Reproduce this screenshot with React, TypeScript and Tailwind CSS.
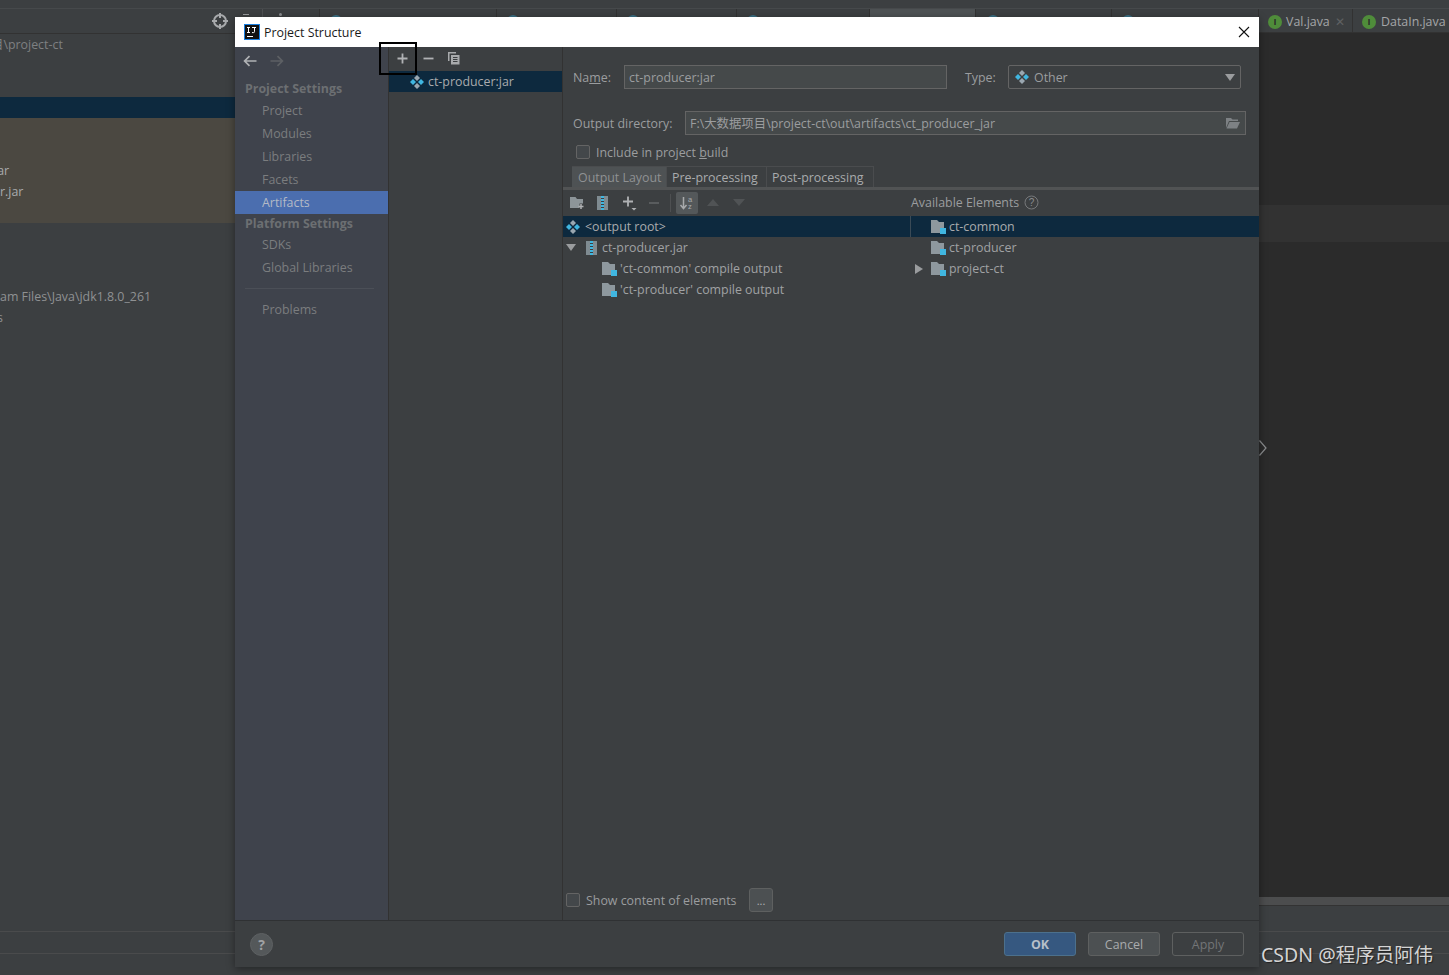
import React from "react";

const Artifact = ({ s = 14 }: { s?: number }) => (
  <svg width={s} height={s} viewBox="0 0 14 14" className="shrink-0">
    <path d="M7 0 10 3 7 6 4 3Z" fill="#9aa7b0" />
    <path d="M7 8 10 11 7 14 4 11Z" fill="#9aa7b0" />
    <path d="M3 4 6 7 3 10 0 7Z" fill="#40b6e0" />
    <path d="M11 4 14 7 11 10 8 7Z" fill="#40b6e0" />
  </svg>
);

const Module = () => (
  <svg width="15" height="14" viewBox="0 0 15 14" className="shrink-0">
    <path d="M0 0H6L8 2H13V8H9V13H0Z" fill="#8e989e" />
    <rect x="9" y="8" width="6" height="6" fill="#40b6e0" />
  </svg>
);

const Jar = () => (
  <svg width="11" height="14" viewBox="0 0 11 14" className="shrink-0">
    <rect x="0" y="0" width="4" height="14" fill="#7f8b91" />
    <rect x="7" y="0" width="4" height="14" fill="#7f8b91" />
    <path d="M4 0h3v2H4zM4 3h3v2H4zM4 6h3v2H4zM4 9h3v2H4zM4 12h3v2H4z" fill="#40b6e0" />
  </svg>
);

const Down = ({ c = "#9a9c9e" }: { c?: string }) => (
  <svg width="10" height="7" viewBox="0 0 10 7" className="shrink-0"><path d="M0 0H10L5 7Z" fill={c} /></svg>
);

const Arrow = ({ dir, c }: { dir: "l" | "r"; c: string }) => (
  <svg width="14" height="12" viewBox="0 0 14 12" className="shrink-0">
    {dir === "l" ? (
      <path d="M13.5 6H2M6.5 1.2 1.6 6l4.9 4.8" fill="none" stroke={c} strokeWidth="1.7" />
    ) : (
      <path d="M.5 6H12M7.5 1.2 12.4 6l-4.9 4.8" fill="none" stroke={c} strokeWidth="1.7" />
    )}
  </svg>
);

const SideItem = ({ t, on }: { t: string; on?: boolean }) => (
  <div className={`h-[23px] pl-[27px] flex items-center ${on ? "bg-[#4b6eaf] text-[#b4bac6]" : "text-[#7b7d7f]"}`}>{t}</div>
);

const SideHead = ({ t, h }: { t: string; h: string }) => (
  <div className={`${h} pl-[10px] flex items-center font-bold text-[#6c6f72]`}>{t}</div>
);

const Btn = ({ t, cls }: { t: string; cls: string }) => (
  <div className={`w-[72px] h-[24px] rounded-[3px] border flex items-center justify-center ${cls}`}>{t}</div>
);

const Tab = ({ t, cls }: { t: string; cls: string }) => (
  <div className={`h-[21px] flex items-center border-t border-r border-[#4a4c4e] ${cls}`}>{t}</div>
);

const HiddenTab = ({ w, tip }: { w: string; tip: string }) => (
  <div className={`${w} h-full shrink-0 border-r border-[#323232] ${tip}`}>
    <div className="w-[12px] h-[12px] rounded-full bg-[#3a7186] mt-[6px]" />
  </div>
);

const ClassIcon = () => (
  <span className="w-[14px] h-[14px] rounded-full bg-[#4f8c3a] text-[#2b2b2b] text-[9px] font-bold flex items-center justify-center shrink-0">I</span>
);

export default function App() {
  return (
    <div className="relative w-[1449px] h-[975px] overflow-hidden bg-[#3c3f41] text-[12.4px] leading-[15px] text-[#9b9d9f] font-['Open_Sans','Noto_Sans_CJK_SC',sans-serif]">
      {/* IDE behind the dialog */}
      <div className="h-[9px] bg-[#3c3f41] border-b border-[#46494b]" />
      <div className="flex h-[966px]">
        <div className="w-[320px] shrink-0 flex flex-col bg-[#3c3f41]">
          <div className="h-[25px] border-b border-r border-[#323232] flex items-center pl-[212px]">
            <svg width="16" height="16" viewBox="0 0 16 16" className="shrink-0">
              <circle cx="8" cy="8" r="6" fill="none" stroke="#a8aaac" strokeWidth="2" />
              <path d="M8 0v5M8 11v5M0 8h5M11 8h5" stroke="#a8aaac" strokeWidth="2" />
            </svg>
            <div className="w-[6px] h-px bg-[#9a9c9e] ml-[15px] self-start mt-[5px]" />
            <div className="w-px h-full bg-[#4e5052] ml-[13px]" />
            <div className="w-[3px] h-[3px] rounded-full bg-[#8a8c8e] ml-[16px] self-start mt-[4px]" />
          </div>
          <div className="h-[21px] flex items-center text-[#7e8082] whitespace-nowrap -ml-[9px]">目\project-ct</div>
          <div className="h-[42px]" />
          <div className="h-[21px] bg-[#0d293e]" />
          <div className="h-[105px] bg-[#4b4841] flex flex-col justify-end pb-[21px] text-[#a9abad] overflow-hidden">
            <div className="h-[21px] flex items-center -ml-[6px]">jar</div>
            <div className="h-[21px] flex items-center">r.jar</div>
          </div>
          <div className="h-[63px]" />
          <div className="h-[21px] flex items-center whitespace-nowrap text-[#8f9193]">am Files\Java\jdk1.8.0_261</div>
          <div className="h-[21px] flex items-center text-[#8f9193] -ml-[3px]">s</div>
          <div className="flex-1" />
          <div className="h-[22px] border-t border-[#4a4b4c]" />
          <div className="h-[22px] border-t border-[#4a4b4c]" />
        </div>
        <div className="flex-1 flex flex-col">
          <div className="h-[24px] shrink-0 border-b border-[#323232] flex items-stretch text-[#a4a6a8]">
            <HiddenTab w="w-[177px]" tip="pl-[10px]" />
            <HiddenTab w="w-[120px]" tip="pl-[10px]" />
            <HiddenTab w="w-[120px]" tip="pl-[10px]" />
            <HiddenTab w="w-[133px]" tip="pl-[10px]" />
            <div className="w-[106px] shrink-0 bg-[#4e5254] border-r border-[#323232]" />
            <HiddenTab w="w-[136px]" tip="pl-[11px]" />
            <HiddenTab w="w-[147px]" tip="pl-[10px]" />
            <div className="w-[94px] shrink-0 flex items-center gap-[4px] pl-[9px] border-r border-[#323232] pt-[2px] whitespace-nowrap">
              <ClassIcon />
              <span>Val.java</span>
              <span className="text-[#5f6163] text-[12px] ml-[1px]">✕</span>
            </div>
            <div className="flex-1 flex items-center gap-[5px] pl-[9px] whitespace-nowrap pt-[2px]">
              <ClassIcon />
              <span>DataIn.java</span>
            </div>
          </div>
          <div className="flex-1 bg-[#2b2b2b] flex flex-col">
            <div className="h-[172px]" />
            <div className="h-[37px] bg-[#323232]" />
            <div className="flex-1" />
          </div>
          <div className="h-[9px] bg-[#4c4d4e] border-b border-[#333]" />
          <div className="h-[25px]" />
          <div className="h-[22px] border-t border-[#4a4b4c]" />
          <div className="h-[22px] border-t border-[#4a4b4c]" />
        </div>
      </div>
      <svg width="8" height="16" viewBox="0 0 8 16" className="absolute left-[1259px] top-[440px]">
        <path d="M.5.5 7 8 .5 15.5" fill="none" stroke="#8a8c8e" strokeWidth="1.2" />
      </svg>

      {/* Dialog */}
      <div className="absolute left-[235px] top-[17px] w-[1024px] h-[950px] bg-[#3c3f41] flex flex-col shadow-[0_2px_8px_rgba(0,0,0,0.4)]">
        <div className="h-[30px] shrink-0 bg-white text-[#1a1a1a] flex items-center pl-[9px] pr-[9px]">
          <svg width="16" height="16" viewBox="0 0 16 16" className="shrink-0">
            <rect width="16" height="16" fill="#1a7fe0" />
            <rect x="1" y="1" width="14" height="14" fill="#111" />
            <rect x="3" y="12" width="6" height="1" fill="#fff" />
            <path d="M3 3.5h3M4.5 3.5v5M3 8.5h3M8 3.5h4M10.5 3.5v4.2q0 .9-1 .9H8" fill="none" stroke="#fff" strokeWidth="1" />
          </svg>
          <span className="ml-[4px]">Project Structure</span>
          <svg width="12" height="12" viewBox="0 0 12 12" className="ml-auto mr-[0px]">
            <path d="M1 1 11 11M11 1 1 11" stroke="#111" strokeWidth="1.1" />
          </svg>
        </div>

        <div className="flex-1 flex min-h-0 border-b border-[#2f3133]">
          {/* Sidebar */}
          <div className="w-[154px] shrink-0 bg-[#3f434c] border-r border-[#323232] flex flex-col">
            <div className="h-[31px] flex items-center pl-[8px] gap-[13px] pb-[3px]">
              <Arrow dir="l" c="#b0b2b4" />
              <Arrow dir="r" c="#5d6064" />
            </div>
            <SideHead t="Project Settings" h="h-[21px]" />
            <SideItem t="Project" />
            <SideItem t="Modules" />
            <SideItem t="Libraries" />
            <SideItem t="Facets" />
            <SideItem t="Artifacts" on />
            <SideHead t="Platform Settings" h="h-[19px]" />
            <SideItem t="SDKs" />
            <SideItem t="Global Libraries" />
            <div className="h-[19px] flex items-center pl-[10px] pr-[14px]"><div className="h-px w-full bg-[#4b4f57]" /></div>
            <SideItem t="Problems" />
          </div>

          {/* Artifact list */}
          <div className="w-[174px] shrink-0 border-r border-[#323232] flex flex-col">
            <div className="h-[24px] flex items-center pl-[7px] gap-[13px] pb-[2px]">
              <svg width="13" height="13" viewBox="0 0 13 13"><path d="M6.5 1.5v10M1.5 6.5h10" stroke="#b0b2b4" strokeWidth="1.8" /></svg>
              <svg width="13" height="13" viewBox="0 0 13 13"><path d="M1.5 6.5h10" stroke="#b0b2b4" strokeWidth="1.8" /></svg>
              <svg width="13" height="14" viewBox="0 0 13 14" className="-ml-[1px]">
                <path d="M1 1v9h1.5V2.5H9V1Z" fill="#a8aaac" />
                <path d="M4 4h8.5v9.5H4Z" fill="#a8aaac" />
                <path d="M6 6.5h4.5M6 8.5h4.5M6 10.5h4.5" stroke="#3c3f41" strokeWidth="1" />
              </svg>
            </div>
            <div className="h-[21px] bg-[#0d293e] flex items-center pl-[21px] gap-[4px] text-[#a9abad]">
              <Artifact />
              <span>ct-producer:jar</span>
            </div>
          </div>

          {/* Settings */}
          <div className="flex-1 min-w-0 flex flex-col">
            <div className="h-[18px] shrink-0" />
            <div className="h-[24px] shrink-0 flex items-center pl-[10px]">
              <span className="w-[51px]">Na<span className="underline">m</span>e:</span>
              <div className="w-[323px] h-full bg-[#45494a] border border-[#646464] flex items-center pl-[4px]">ct-producer:jar</div>
              <span className="ml-[18px] w-[43px]">Type:</span>
              <div className="w-[233px] h-full bg-[#3c3f41] border border-[#646464] rounded-[2px] flex items-center pl-[6px] pr-[5px] gap-[5px]">
                <Artifact />
                <span>Other</span>
                <span className="ml-auto"><Down /></span>
              </div>
            </div>
            <div className="h-[22px] shrink-0" />
            <div className="h-[24px] shrink-0 flex items-center pl-[10px]">
              <span className="w-[112px] whitespace-nowrap">Output directory:</span>
              <div className="w-[561px] h-full bg-[#45494a] border border-[#646464] flex items-center pl-[4px] pr-[5px] whitespace-nowrap">
                <span>F:\大数据项目\project-ct\out\artifacts\ct_producer_jar</span>
                <svg width="15" height="12" viewBox="0 0 15 12" className="ml-auto shrink-0">
                  <path d="M1 11V1h5l1.5 1.5H13V4H4L1 11Z" fill="#7d8184" />
                  <path d="M4.5 5H15l-3 6.5H1.5Z" fill="#7d8184" />
                </svg>
              </div>
            </div>
            <div className="h-[10px] shrink-0" />
            <div className="h-[14px] shrink-0 flex items-center pl-[13px] gap-[6px]">
              <div className="w-[14px] h-[14px] rounded-[2px] border border-[#646464] bg-[#43474a]" />
              <span>Include in project <span className="underline">b</span>uild</span>
            </div>
            <div className="h-[7px] shrink-0" />
            <div className="h-[21px] shrink-0 flex pl-[9px]">
              <Tab t="Output Layout" cls="w-[95px] pl-[6px] bg-[#4e5254] text-[#8f9193]" />
              <Tab t="Pre-processing" cls="w-[100px] pl-[5px] text-[#a9abad]" />
              <Tab t="Post-processing" cls="w-[107px] pl-[5px] text-[#a9abad]" />
            </div>
            <div className="h-[3px] shrink-0 bg-[#515354]" />
            <div className="h-[25px] shrink-0 flex items-center relative">
              <div className="w-[348px] flex items-center pl-[7px] h-full">
                <svg width="14" height="12" viewBox="0 0 14 12" className="shrink-0">
                  <path d="M0 0H5.5L7 2H13V6.5H9.5V11H0Z" fill="#8d9599" />
                  <path d="M11 7v5M8.5 9.5h5" stroke="#b0b2b4" strokeWidth="1.5" />
                </svg>
                <span className="ml-[13px]"><Jar /></span>
                <svg width="16" height="16" viewBox="0 0 16 16" className="ml-[14px] shrink-0">
                  <path d="M6 1.5v10M1 6.5h10" stroke="#b0b2b4" strokeWidth="1.8" />
                  <path d="M9.5 13h5l-2.5 2.5Z" fill="#b0b2b4" />
                </svg>
                <svg width="12" height="12" viewBox="0 0 12 12" className="ml-[10px] shrink-0"><path d="M1 6h10" stroke="#5d6062" strokeWidth="1.8" /></svg>
                <div className="w-px h-[18px] bg-[#4e5052] ml-[10px]" />
                <div className="w-[22px] h-[22px] ml-[5px] rounded-[2px] bg-[#54585a] flex items-center justify-center shrink-0">
                  <svg width="16" height="16" viewBox="0 0 16 16">
                    <path d="M4.5 2v11M1.5 10 4.5 13.5 7.5 10" fill="none" stroke="#a8aaac" strokeWidth="1.5" />
                    <text x="9" y="7" fontSize="7.5" fill="#a8aaac" fontFamily="Liberation Sans">a</text>
                    <text x="9" y="14" fontSize="7.5" fill="#a8aaac" fontFamily="Liberation Sans">z</text>
                  </svg>
                </div>
                <svg width="12" height="7" viewBox="0 0 12 7" className="ml-[9px] shrink-0"><path d="M0 7H12L6 0Z" fill="#505355" /></svg>
                <svg width="12" height="7" viewBox="0 0 12 7" className="ml-[14px] shrink-0"><path d="M0 0H12L6 7Z" fill="#505355" /></svg>
              </div>
              <div className="flex items-center gap-[5px] whitespace-nowrap">
                <span>Available Elements</span>
                <svg width="15" height="15" viewBox="0 0 15 15">
                  <circle cx="7.5" cy="7.5" r="6.5" fill="none" stroke="#77797b" />
                  <text x="7.5" y="11" fontSize="10" textAnchor="middle" fill="#8a8c8e" fontFamily="Liberation Sans">?</text>
                </svg>
              </div>
            </div>

            {/* Trees */}
            <div className="flex-1 min-h-0 flex">
              <div className="w-[347px] shrink-0 flex flex-col pt-[1px]">
                <div className="h-[21px] bg-[#0d293e] flex items-center pl-[3px] gap-[5px] text-[#a9abad]">
                  <Artifact />
                  <span>&lt;output root&gt;</span>
                </div>
                <div className="h-[21px] flex items-center pl-[3px] text-[#a0a2a4]">
                  <Down />
                  <span className="ml-[10px]"><Jar /></span>
                  <span className="ml-[5px]">ct-producer.jar</span>
                </div>
                <div className="h-[21px] flex items-center pl-[39px] gap-[3px] text-[#a0a2a4]"><Module /><span>'ct-common' compile output</span></div>
                <div className="h-[21px] flex items-center pl-[39px] gap-[3px] text-[#a0a2a4]"><Module /><span>'ct-producer' compile output</span></div>
              </div>
              <div className="flex-1 flex flex-col pt-[1px]">
                <div className="h-[21px] bg-[#0d293e] border-l border-[#3a4a56] flex items-center pl-[20px] gap-[3px] text-[#a9abad]"><Module /><span>ct-common</span></div>
                <div className="h-[21px] flex items-center pl-[21px] gap-[3px] text-[#a0a2a4]"><Module /><span>ct-producer</span></div>
                <div className="h-[21px] flex items-center pl-[5px] text-[#a0a2a4]">
                  <svg width="8" height="10" viewBox="0 0 8 10" className="shrink-0"><path d="M0 0 8 5 0 10Z" fill="#9a9c9e" /></svg>
                  <span className="ml-[8px]"><Module /></span>
                  <span className="ml-[3px]">project-ct</span>
                </div>
              </div>
            </div>

            <div className="h-[24px] shrink-0 flex items-center pl-[3px] mb-[8px]">
              <div className="w-[14px] h-[14px] rounded-[2px] border border-[#646464] bg-[#43474a]" />
              <span className="ml-[6px] w-[163px] whitespace-nowrap">Show content of elements</span>
              <div className="w-[24px] h-[24px] rounded-[3px] border border-[#5e6060] bg-[#4c5052] flex items-center justify-center text-[11px] text-[#b0b2b4]">...</div>
            </div>
          </div>
        </div>

        {/* Footer */}
        <div className="h-[46px] shrink-0 flex items-center pl-[15px] pr-[15px] gap-[12px]">
          <div className="w-[23px] h-[23px] rounded-full bg-[#54585a] border border-[#5e6163] flex items-center justify-center font-bold text-[#a0a2a4] text-[14px] mr-auto">?</div>
          <Btn t="OK" cls="bg-[#365880] border-[#4c708c] text-[#b6bfc9] font-bold" />
          <Btn t="Cancel" cls="bg-[#4c5052] border-[#5e6060] text-[#a9abad]" />
          <Btn t="Apply" cls="border-[#5e6060] text-[#737577]" />
        </div>
      </div>

      {/* Annotation drawn over the screenshot */}
      <div className="absolute left-[379px] top-[42px] w-[38px] h-[33px] border-2 border-black" />

      {/* Watermark */}
      <div className="absolute left-[1261px] top-[943px] text-[19.5px] leading-[24px] whitespace-nowrap text-[#d4d4d4] [text-shadow:1px_1px_1px_#222] font-['Noto_Sans','Noto_Sans_CJK_SC',sans-serif]">CSDN @程序员阿伟</div>
    </div>
  );
}
